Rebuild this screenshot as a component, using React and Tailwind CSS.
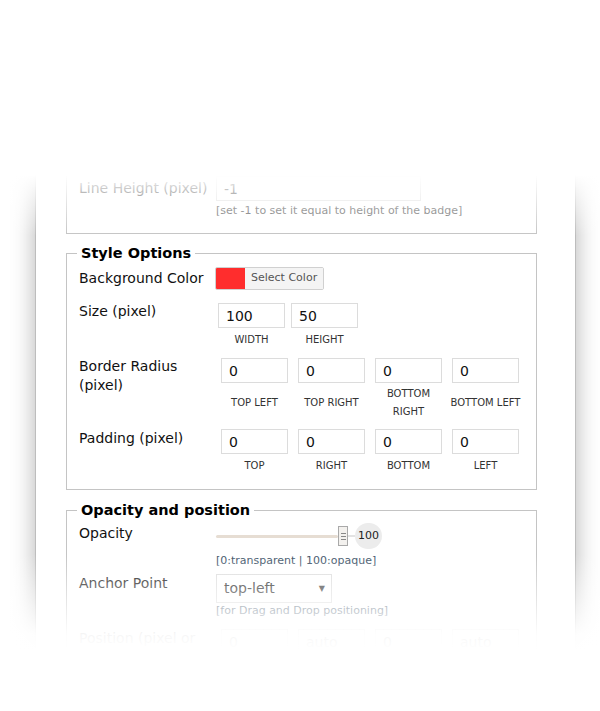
import React from 'react';

const font = { fontFamily: '"DejaVu Sans", Verdana, sans-serif' };

// small text field used in every row of the form
const Field = ({ value, className = '' }) => (
  <input
    readOnly
    value={value}
    className={`h-[25px] border border-[#dcdcdc] bg-white pl-[7px] text-[14px] text-[#111] outline-none ${className}`}
  />
);

const Hint = ({ children }) => (
  <p className="pl-[137px] text-[11px] leading-[16px] text-[#44576b]">{children}</p>
);

const Legend = ({ children }) => (
  <legend className="ml-[-2px] px-[4px] text-[14.5px] font-bold leading-[18px] text-black">
    {children}
  </legend>
);

const sizeCells = [
  ['100', 'WIDTH'],
  ['50', 'HEIGHT'],
];

const radiusCells = [
  ['0', 'TOP LEFT'],
  ['0', 'TOP RIGHT'],
  ['0', 'BOTTOM RIGHT'],
  ['0', 'BOTTOM LEFT'],
];

const paddingCells = [
  ['0', 'TOP'],
  ['0', 'RIGHT'],
  ['0', 'BOTTOM'],
  ['0', 'LEFT'],
];

const positionCells = ['0', 'auto', '0', 'auto'];

export default function App() {
  return (
    <div className="relative h-[711px] w-[600px] overflow-hidden bg-white pl-[35px] pt-[150px]" style={font}>
      <div className="h-[520px] w-[541px] overflow-hidden border-x border-[#bdbdbd] bg-white pl-[30px] pr-[38px] shadow-[0_0_22px_rgba(0,0,0,0.3)]">

        {/* tail of the text options block */}
        <div className="h-[84px] border-x border-b border-[#c4c4c4] px-[12px] pt-[26px]">
          <div className="flex">
            <span className="w-[137px] text-[14px] leading-[25px] text-[#111]">Line Height (pixel)</span>
            <Field value="-1" className="w-[205px]" />
          </div>
          <p className="mt-[2px] pl-[137px] text-[11px] leading-[16px] text-[#555]">
            [set -1 to set it equal to height of the badge]
          </p>
        </div>

        {/* Style Options */}
        <fieldset className="mt-[10px] border border-[#c4c4c4] px-[12px] pb-[14px]">
          <Legend>Style Options</Legend>

          <div className="mt-[5px] flex h-[23px] items-center">
            <span className="w-[136px] text-[14px] text-[#111]">Background Color</span>
            <div className="flex h-[23px] overflow-hidden rounded-[2px] border border-[#d0d0d0]">
              <div className="w-[29px] bg-[#ff2d2d]" />
              <button type="button" className="bg-[#f4f4f4] px-[6px] text-[11px] text-[#555]">
                Select Color
              </button>
            </div>
          </div>

          <div className="mt-[13px] flex items-start">
            <span className="w-[136px] text-[14px] leading-[17px] text-[#111]">Size (pixel)</span>
            {sizeCells.map(([v, c]) => (
              <div key={c} className="flex w-[73px] flex-col items-center">
                <Field value={v} className="w-[67px]" />
                <span className="mt-[3px] text-[10px] leading-[18px] text-[#333]">{c}</span>
              </div>
            ))}
          </div>

          <div className="mt-[9px] flex items-start">
            <span className="-mt-[1px] w-[137px] text-[14px] leading-[19px] text-[#111]">
              Border Radius<br />(pixel)
            </span>
            {radiusCells.map(([v, c]) => (
              <div key={c} className="flex w-[77px] flex-col items-center">
                <Field value={v} className="h-[24px] w-[67px]" />
                <span className="mt-[2px] flex h-[36px] w-[74px] items-center justify-center text-center text-[10px] leading-[18px] text-[#333]">
                  {c === 'BOTTOM RIGHT' ? <>BOTTOM<br />RIGHT</> : c}
                </span>
              </div>
            ))}
          </div>

          <div className="mt-[8px] flex items-start">
            <span className="w-[137px] text-[14px] leading-[19px] text-[#111]">Padding (pixel)</span>
            {paddingCells.map(([v, c]) => (
              <div key={c} className="flex w-[77px] flex-col items-center">
                <Field value={v} className="w-[67px]" />
                <span className="mt-[3px] text-[10px] leading-[18px] text-[#333]">{c}</span>
              </div>
            ))}
          </div>
        </fieldset>

        {/* Opacity and position */}
        <fieldset className="mt-[11px] border border-[#c4c4c4] px-[12px] pb-[20px]">
          <Legend>Opacity and position</Legend>

          <div className="mt-[4px] flex h-[26px] items-start">
            <span className="mt-[1px] w-[137px] text-[14px] leading-[18px] text-[#111]">Opacity</span>
            <div className="flex h-[26px] items-center">
              <div className="h-[3px] w-[122px] rounded-full bg-[#e6ddd3]" />
              <div className="flex h-[20px] w-[10px] flex-col items-center justify-center gap-[2px] border border-[#a9a9a9] bg-[#f3f1ee]">
                <span className="h-px w-[5px] bg-[#888]" />
                <span className="h-px w-[5px] bg-[#888]" />
                <span className="h-px w-[5px] bg-[#888]" />
              </div>
              <div className="h-[2px] w-[7px] bg-[#e3e3e3]" />
              <div className="flex h-[26px] w-[27px] items-center justify-center rounded-full bg-[#ececec] text-[11px] text-[#222]">
                100
              </div>
            </div>
          </div>

          <div className="mt-[4px]">
            <Hint>[0:transparent | 100:opaque]</Hint>
          </div>

          <div className="mt-[5px] flex items-start">
            <span className="w-[137px] text-[14px] leading-[18px] text-[#111]">Anchor Point</span>
            <div className="flex h-[29px] w-[116px] items-center justify-between border border-[#dcdcdc] pl-[7px] pr-[6px] text-[14px] text-[#222]">
              <span>top-left</span>
              <span className="text-[8px] text-[#333]">▼</span>
            </div>
          </div>
          <Hint>[for Drag and Drop positioning]</Hint>

          <div className="mt-[10px] flex items-start">
            <span className="w-[137px] text-[14px] leading-[19px] text-[#111]">
              Position (pixel or<br />%)
            </span>
            {positionCells.map((v, i) => (
              <div key={i} className="flex w-[77px] justify-center">
                <Field value={v} className="h-[26px] w-[67px]" />
              </div>
            ))}
          </div>
        </fieldset>
      </div>

      {/* fade-out at the top and bottom edges of the shot */}
      <div className="pointer-events-none absolute inset-x-0 top-0 h-[240px] bg-[linear-gradient(to_bottom,#fff_175px,rgba(255,255,255,0)_236px)]" />
      <div className="pointer-events-none absolute inset-x-0 top-[550px] h-[161px] bg-[linear-gradient(to_bottom,rgba(255,255,255,0)_4px,rgba(255,255,255,0.96)_84px,#fff_100px)]" />
    </div>
  );
}
